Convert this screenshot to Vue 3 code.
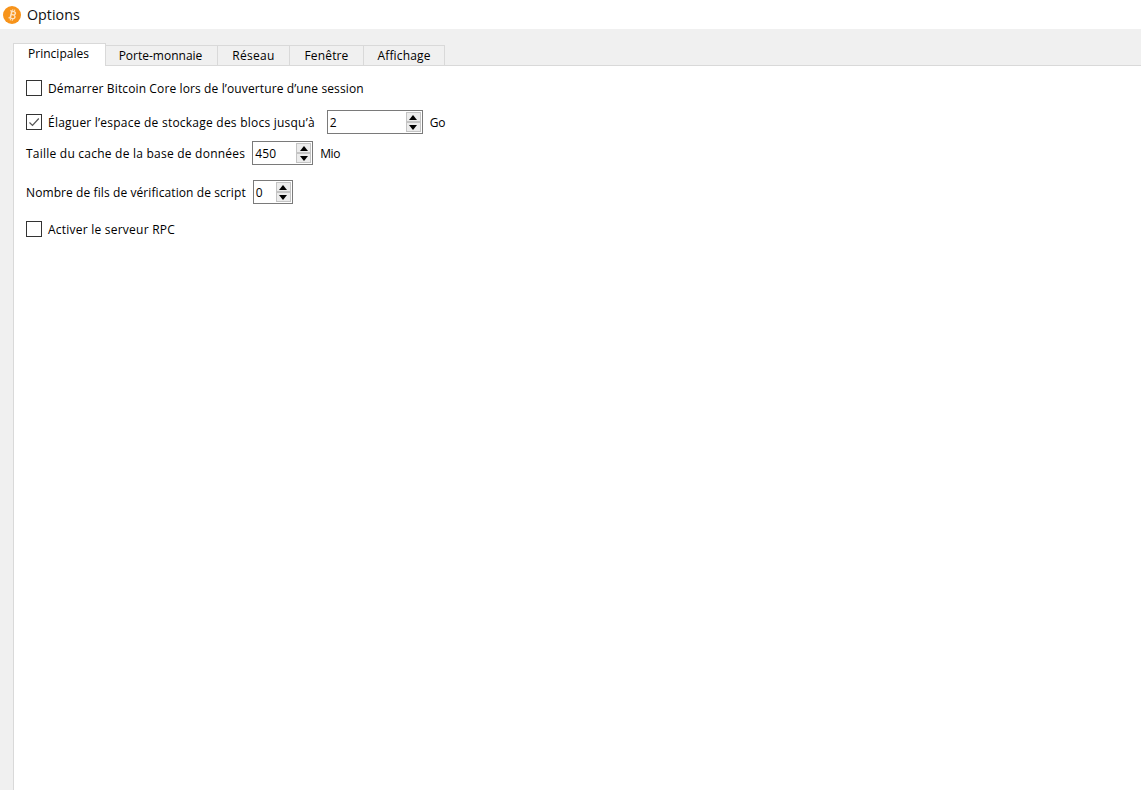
<script setup>
const tabs = ['Principales', 'Porte-monnaie', 'Réseau', 'Fenêtre', 'Affichage']
</script>

<template>
  <div class="window">
    <header class="title">
      <svg class="logo" width="18" height="18" viewBox="0 0 18 18">
        <circle cx="9" cy="9" r="9" fill="#f7931a" />
        <g transform="rotate(14 9 9)" fill="#fde3c0">
          <path fill-rule="evenodd" d="M6.300 4.600h3.900c1.500 0 2.400.9 2.400 2.100 0 .8-.4 1.500-1.100 1.800 1 .3 1.600 1.100 1.600 2.100 0 1.400-1.100 2.500-2.700 2.500H6.300v-1.300h.9V5.900h-.9z M8.800 5.900v2.100h1.200c.7 0 1.100-.4 1.100-1.050S10.700 5.900 10 5.900z M8.800 9.300v2.500h1.500c.8 0 1.300-.5 1.300-1.250s-.5-1.250-1.300-1.250z" />
          <rect x="8" y="3.200" width="1" height="1.500" />
          <rect x="10" y="3.200" width="1" height="1.500" />
          <rect x="8" y="13" width="1" height="1.600" />
          <rect x="10" y="13" width="1" height="1.600" />
        </g>
      </svg>
      <span>Options</span>
    </header>
    <div class="body">
      <nav class="tabs">
        <div v-for="(t, i) in tabs" :key="t" class="tab" :class="[`t${i}`, { active: i === 0 }]"><span>{{ t }}</span></div>
      </nav>
      <main class="pane">
        <label class="row r1"><span class="check"></span><span class="ls1">Démarrer Bitcoin Core lors de l’ouverture d’une session</span></label>
        <div class="row r2">
          <span class="check">
            <svg width="14" height="14" viewBox="0 0 14 14"><path d="M2.500 7.500 5.500 10.500 11.800 3.500" fill="none" stroke="#555" stroke-width="1.200" /></svg>
          </span>
          <span class="ls2">Élaguer l’espace de stockage des blocs jusqu’à</span>
          <div class="spin w96"><span class="val">2</span><span class="btns"><i class="up"></i><i class="down"></i></span></div>
          <span class="unit">Go</span>
        </div>
        <div class="row r3">
          <span class="ls2">Taille du cache de la base de données</span>
          <div class="spin w61"><span class="val">450</span><span class="btns"><i class="up"></i><i class="down"></i></span></div>
          <span class="unit">Mio</span>
        </div>
        <div class="row r4">
          <span class="ls3">Nombre de fils de vérification de script</span>
          <div class="spin w40"><span class="val">0</span><span class="btns"><i class="up"></i><i class="down"></i></span></div>
        </div>
        <label class="row r5"><span class="check"></span><span class="ls2">Activer le serveur RPC</span></label>
      </main>
    </div>
  </div>
</template>

<style>
html, body { margin: 0; background: #fff; }
</style>

<style scoped>
.window {
  width: 1141px;
  height: 790px;
  display: flex;
  flex-direction: column;
  overflow: hidden;
  font-family: "Open Sans", "Noto Sans", sans-serif;
  font-size: 12px;
  color: #000;
  background: #fff;
}
.title {
  height: 29px;
  display: flex;
  align-items: center;
  gap: 6px;
  padding-left: 3px;
  font-size: 14.3px;
  color: #111;
  flex: none;
}
.title span { margin-top: -1px; }
.logo { flex: none; }
.body {
  flex: 1;
  display: flex;
  flex-direction: column;
  background: #f0f0f0;
  padding: 14px 0 0 13px;
  min-height: 0;
}
.tabs {
  display: flex;
  align-items: flex-end;
  height: 23px;
  flex: none;
  margin-bottom: -1px;
  position: relative;
  z-index: 1;
}
.tab {
  height: 21px;
  box-sizing: border-box;
  border: 1px solid #d9d9d9;
  border-left: none;
  display: flex;
  align-items: center;
  justify-content: center;
  background: #f0f0f0;
}
.tab.active {
  height: 23px;
  background: #fff;
  border-left: 1px solid #d9d9d9;
  border-bottom: none;
  padding: 0 2px 3px 0;
}
.t0 { width: 93px; }
.t1 { width: 112px; padding-right: 2px; }
.t2 { width: 72px; }
.t3 { width: 74px; }
.t4 { width: 81px; }
.t2 span { letter-spacing: .3px; }
.t3 span, .t4 span { letter-spacing: .15px; }
.pane {
  flex: 1;
  background: #fff;
  border-left: 1px solid #d9d9d9;
  border-top: 1px solid #d9d9d9;
  padding-left: 12px;
}
.row {
  display: flex;
  align-items: center;
  height: 24px;
}
.ls1 { letter-spacing: .12px; }
.ls2 { letter-spacing: .23px; }
.ls3 { letter-spacing: .09px; }
.r1 { margin-top: 10px; }
.r2 { margin-top: 10px; }
.r3 { margin-top: 7px; }
.r4 { margin-top: 15px; }
.r5 { margin-top: 13px; }
.check {
  width: 16px;
  height: 16px;
  box-sizing: border-box;
  border: 1px solid #333;
  margin-right: 6px;
  display: flex;
  align-items: center;
  justify-content: center;
  flex: none;
}
.spin {
  height: 24px;
  box-sizing: border-box;
  border: 1px solid #7a7a7a;
  display: flex;
  align-items: center;
  justify-content: space-between;
  padding: 0 1px 0 2px;
  flex: none;
}
.w96 { width: 96px; margin-left: 12px; }
.w61 { width: 61px; margin-left: 7px; }
.w40 { width: 40px; margin-left: 7px; }
.val { letter-spacing: .2px; }
.unit { margin-left: 7px; letter-spacing: -.4px; }
.btns {
  width: 15px;
  height: 20px;
  display: flex;
  flex-direction: column;
  flex: none;
}
.btns i {
  flex: 1;
  box-sizing: border-box;
  border: 1px solid #c4c4c4;
  background: #ececec;
  display: flex;
  align-items: center;
  justify-content: center;
}
.btns i::before {
  content: "";
  width: 0;
  height: 0;
  border-left: 4.500px solid transparent;
  border-right: 4.500px solid transparent;
}
.up::before { border-bottom: 5px solid #000; }
.down::before { border-top: 5px solid #000; }
</style>
